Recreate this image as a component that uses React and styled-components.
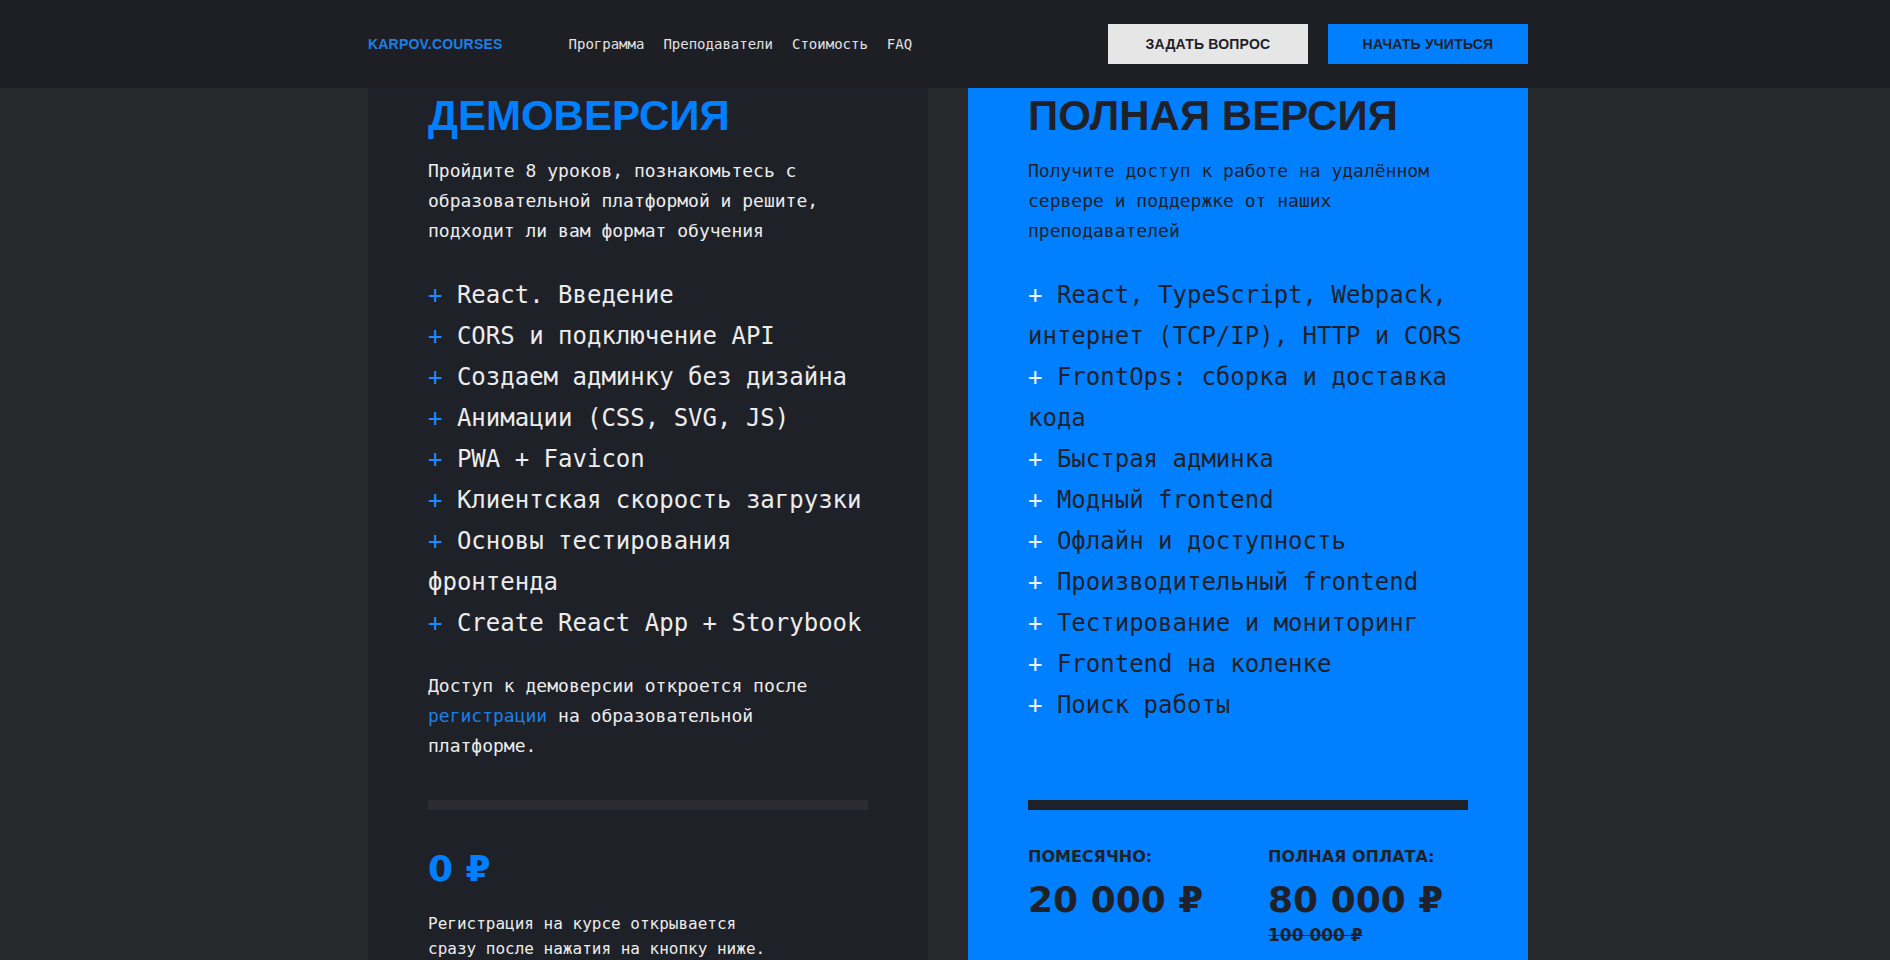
import React from 'react';
import styled, { createGlobalStyle } from 'styled-components';

const MONO = '"DejaVu Sans Mono", "Liberation Mono", monospace';
const SANS = '"Liberation Sans", Arial, sans-serif';
const WIDE = '"DejaVu Sans", "Liberation Sans", sans-serif';

const BLUE = '#0080ff';
const INK = '#1f2128';

const GlobalStyle = createGlobalStyle`
  *, *::before, *::after { box-sizing: border-box; }
  html, body { margin: 0; padding: 0; background: #27292d; }
  body {
    font-family: ${MONO};
    color: #ececec;
    -webkit-font-smoothing: antialiased;
  }
`;

const Header = styled.header`
  height: 88px;
  background: #1e1f25;
`;

const HeaderInner = styled.div`
  width: 1160px;
  height: 100%;
  margin-left: calc(50% - 577px);
  display: flex;
  align-items: center;
`;

const Logo = styled.a`
  font-family: ${SANS};
  font-weight: 700;
  font-size: 14px;
  letter-spacing: 0.2px;
  color: #1b7fe6;
  text-decoration: none;
`;

const Nav = styled.nav`
  display: flex;
  gap: 19px;
  margin-left: 66px;
`;

const NavLink = styled.a`
  font-family: ${MONO};
  font-size: 14px;
  color: #e2e2e2;
  text-decoration: none;
`;

const Actions = styled.div`
  margin-left: auto;
  display: flex;
  gap: 20px;
`;

const Button = styled.button`
  width: 200px;
  height: 40px;
  border: 0;
  padding: 0;
  font-family: ${SANS};
  font-weight: 700;
  font-size: 14px;
  letter-spacing: 0.2px;
  text-transform: uppercase;
  color: ${INK};
  background: ${(p) => (p.$primary ? BLUE : '#e6e6e6')};
  cursor: pointer;
`;

const Main = styled.main`
  width: 1160px;
  margin-left: calc(50% - 577px);
  display: grid;
  grid-template-columns: 560px 560px;
  gap: 40px;
`;

const Panel = styled.section`
  background: ${(p) => (p.$accent ? BLUE : INK)};
  color: ${(p) => (p.$accent ? INK : '#ececec')};
  padding: 4px 60px 40px;
  display: flex;
  flex-direction: column;
`;

const Title = styled.h2`
  margin: 0;
  font-family: ${SANS};
  font-weight: 700;
  font-size: 42px;
  line-height: 48px;
  text-transform: uppercase;
  color: ${(p) => (p.$accent ? INK : BLUE)};
`;

const Lead = styled.p`
  margin: 16px 0 0;
  font-size: 18px;
  line-height: 30px;
`;

const List = styled.ul`
  margin: 29px 0 0;
  padding: 0;
  list-style: none;
  font-size: 24px;
  line-height: 41px;
`;

const Plus = styled.span`
  color: ${(p) => (p.$accent ? '#eef4ff' : '#1a8cff')};
`;

const Note = styled.p`
  margin: 27px 0 0;
  font-size: 18px;
  line-height: 30px;
`;

const Link = styled.a`
  color: #1a7fe6;
  text-decoration: none;
`;

const Divider = styled.div`
  height: 10px;
  margin-top: ${(p) => p.$offset}px;
  background: ${(p) => (p.$accent ? INK : '#2a2c32')};
`;

const FreePrice = styled.div`
  margin-top: 37px;
  font-family: ${WIDE};
  font-weight: 700;
  font-size: 36px;
  line-height: 43px;
  color: ${BLUE};
`;

const SmallNote = styled.p`
  margin: 21px 0 0;
  max-width: 350px;
  font-size: 16px;
  line-height: 25px;
`;

const PriceGrid = styled.div`
  margin-top: 37px;
  display: grid;
  grid-template-columns: 240px 200px;
`;

const PriceCol = styled.div`
  display: flex;
  flex-direction: column;
`;

const PriceLabel = styled.div`
  font-family: ${WIDE};
  font-weight: 700;
  font-size: 16px;
  line-height: 19px;
  text-transform: uppercase;
`;

const PriceValue = styled.div`
  margin-top: 12px;
  font-family: ${WIDE};
  font-weight: 700;
  font-size: 36px;
  line-height: 43px;
  white-space: nowrap;
`;

const OldPrice = styled.div`
  margin-top: 4px;
  font-family: ${WIDE};
  font-weight: 700;
  font-size: 17px;
  line-height: 20px;
  text-decoration: line-through;
`;

const demoItems = [
  'React. Введение',
  'CORS и подключение API',
  'Создаем админку без дизайна',
  'Анимации (CSS, SVG, JS)',
  'PWA + Favicon',
  'Клиентская скорость загрузки',
  'Основы тестирования фронтенда',
  'Create React App + Storybook',
];

const fullItems = [
  'React, TypeScript, Webpack, интернет (TCP/IP), HTTP и CORS',
  'FrontOps: сборка и доставка кода',
  'Быстрая админка',
  'Модный frontend',
  'Офлайн и доступность',
  'Производительный frontend',
  'Тестирование и мониторинг',
  'Frontend на коленке',
  'Поиск работы',
];

function Items({ items, accent }) {
  return (
    <List>
      {items.map((t) => (
        <li key={t}>
          <Plus $accent={accent}>+</Plus> {t}
        </li>
      ))}
    </List>
  );
}

export default function App() {
  return (
    <>
      <GlobalStyle />
      <Header>
        <HeaderInner>
          <Logo href="#">KARPOV.COURSES</Logo>
          <Nav>
            <NavLink href="#">Программа</NavLink>
            <NavLink href="#">Преподаватели</NavLink>
            <NavLink href="#">Стоимость</NavLink>
            <NavLink href="#">FAQ</NavLink>
          </Nav>
          <Actions>
            <Button>Задать вопрос</Button>
            <Button $primary>Начать учиться</Button>
          </Actions>
        </HeaderInner>
      </Header>
      <Main>
        <Panel>
          <Title>Демоверсия</Title>
          <Lead>
            Пройдите 8 уроков, познакомьтесь с образовательной платформой и решите, подходит ли вам
            формат обучения
          </Lead>
          <Items items={demoItems} />
          <Note>
            Доступ к демоверсии откроется после <Link href="#">регистрации</Link> на образовательной
            платформе.
          </Note>
          <Divider $offset={39} />
          <FreePrice>0 ₽</FreePrice>
          <SmallNote>Регистрация на курсе открывается сразу после нажатия на кнопку ниже.</SmallNote>
        </Panel>
        <Panel $accent>
          <Title $accent>Полная версия</Title>
          <Lead>Получите доступ к работе на удалённом сервере и поддержке от наших преподавателей</Lead>
          <Items items={fullItems} accent />
          <Divider $accent $offset={74} />
          <PriceGrid>
            <PriceCol>
              <PriceLabel>Помесячно:</PriceLabel>
              <PriceValue>20 000 ₽</PriceValue>
            </PriceCol>
            <PriceCol>
              <PriceLabel>Полная оплата:</PriceLabel>
              <PriceValue>80 000 ₽</PriceValue>
              <OldPrice>100 000 ₽</OldPrice>
            </PriceCol>
          </PriceGrid>
        </Panel>
      </Main>
    </>
  );
}
